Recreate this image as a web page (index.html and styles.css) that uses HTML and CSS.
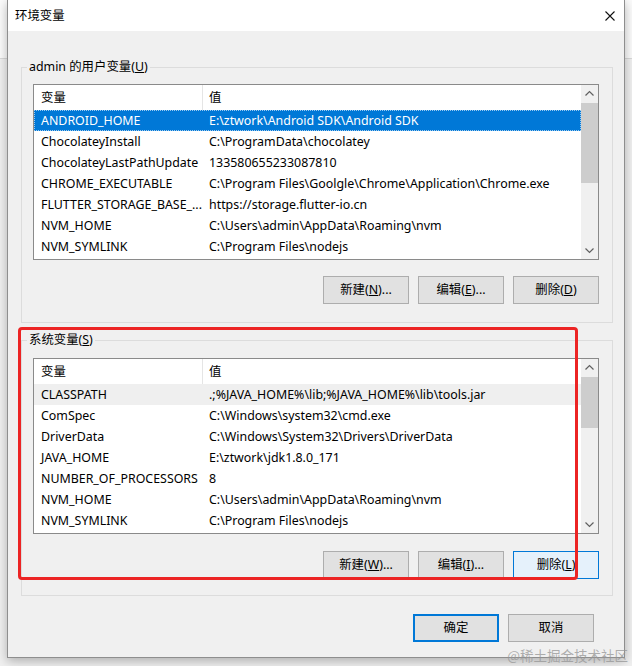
FILE: index.html
```html
<!DOCTYPE html>
<html lang="zh-CN">
<head>
<meta charset="utf-8">
<title>环境变量</title>
<link rel="stylesheet" href="styles.css">
</head>
<body>
<div class="screen">
  <div class="dialog">
    <div class="titlebar">
      <span class="title">环境变量</span>
      <svg class="close" width="10" height="10" viewBox="0 0 10 10"><path d="M0.5 0.5 L9.5 9.5 M9.5 0.5 L0.5 9.5" stroke="#111" stroke-width="1.1" fill="none"/></svg>
    </div>
    <div class="dialog-body">
      <fieldset class="group group-user">
        <legend>admin 的用户变量(<u>U</u>)</legend>
        <div class="group-inner">
          <div class="list">
            <div class="list-main">
              <div class="list-head"><div class="col-name">变量</div><div class="col-value">值</div></div>
              <div class="row selected"><div class="col-name">ANDROID_HOME</div><div class="col-value">E:\ztwork\Android SDK\Android SDK</div></div>
              <div class="row"><div class="col-name">ChocolateyInstall</div><div class="col-value">C:\ProgramData\chocolatey</div></div>
              <div class="row"><div class="col-name">ChocolateyLastPathUpdate</div><div class="col-value">133580655233087810</div></div>
              <div class="row"><div class="col-name">CHROME_EXECUTABLE</div><div class="col-value">C:\Program Files\Goolgle\Chrome\Application\Chrome.exe</div></div>
              <div class="row"><div class="col-name">FLUTTER_STORAGE_BASE_...</div><div class="col-value">https://storage.flutter-io.cn</div></div>
              <div class="row"><div class="col-name">NVM_HOME</div><div class="col-value">C:\Users\admin\AppData\Roaming\nvm</div></div>
              <div class="row"><div class="col-name">NVM_SYMLINK</div><div class="col-value">C:\Program Files\nodejs</div></div>
            </div>
            <div class="scrollbar">
              <div class="sb-arrow"><svg width="17" height="17" viewBox="0 0 17 17"><path d="M4.5 10.5 L8.5 6.5 L12.5 10.5" stroke="#606060" stroke-width="1.2" fill="none"/></svg></div>
              <div class="sb-track"><div class="sb-thumb" style="height:80px"></div></div>
              <div class="sb-arrow"><svg width="17" height="17" viewBox="0 0 17 17"><path d="M4.5 6.5 L8.5 10.5 L12.5 6.5" stroke="#606060" stroke-width="1.2" fill="none"/></svg></div>
            </div>
          </div>
          <div class="btn-row">
            <button class="btn">新建(<u>N</u>)...</button>
            <button class="btn">编辑(<u>E</u>)...</button>
            <button class="btn">删除(<u>D</u>)</button>
          </div>
        </div>
      </fieldset>

      <fieldset class="group group-system">
        <legend>系统变量(<u>S</u>)</legend>
        <div class="group-inner">
          <div class="list">
            <div class="list-main">
              <div class="list-head"><div class="col-name">变量</div><div class="col-value">值</div></div>
              <div class="row inactive"><div class="col-name">CLASSPATH</div><div class="col-value">.;%JAVA_HOME%\lib;%JAVA_HOME%\lib\tools.jar</div></div>
              <div class="row"><div class="col-name">ComSpec</div><div class="col-value">C:\Windows\system32\cmd.exe</div></div>
              <div class="row"><div class="col-name">DriverData</div><div class="col-value">C:\Windows\System32\Drivers\DriverData</div></div>
              <div class="row"><div class="col-name">JAVA_HOME</div><div class="col-value">E:\ztwork\jdk1.8.0_171</div></div>
              <div class="row"><div class="col-name">NUMBER_OF_PROCESSORS</div><div class="col-value">8</div></div>
              <div class="row"><div class="col-name">NVM_HOME</div><div class="col-value">C:\Users\admin\AppData\Roaming\nvm</div></div>
              <div class="row"><div class="col-name">NVM_SYMLINK</div><div class="col-value">C:\Program Files\nodejs</div></div>
            </div>
            <div class="scrollbar">
              <div class="sb-arrow"><svg width="17" height="17" viewBox="0 0 17 17"><path d="M4.5 10.5 L8.5 6.5 L12.5 10.5" stroke="#606060" stroke-width="1.2" fill="none"/></svg></div>
              <div class="sb-track"><div class="sb-thumb" style="height:51px"></div></div>
              <div class="sb-arrow"><svg width="17" height="17" viewBox="0 0 17 17"><path d="M4.5 6.5 L8.5 10.5 L12.5 6.5" stroke="#606060" stroke-width="1.2" fill="none"/></svg></div>
            </div>
          </div>
          <div class="btn-row">
            <button class="btn">新建(<u>W</u>)...</button>
            <button class="btn">编辑(<u>I</u>)...</button>
            <button class="btn btn-focus">删除(<u>L</u>)</button>
          </div>
        </div>
      </fieldset>

      <div class="dialog-actions">
        <button class="btn btn-default">确定</button>
        <button class="btn">取消</button>
      </div>
    </div>
  </div>
  <div class="highlight"></div>
  <div class="watermark">@稀土掘金技术社区</div>
</div>
</body>
</html>
```

FILE: styles.css
```css
html, body {
  margin: 0;
  padding: 0;
}

body {
  font-family: "Noto Sans", "Noto Sans CJK SC", sans-serif;
  font-size: 12.4px;
  color: #000;
}

.screen {
  position: relative;
  width: 632px;
  height: 666px;
  overflow: hidden;
  background: linear-gradient(to bottom, #fbfbfb 0, #fbfbfb 58px, #d9d9d9 58px, #d9d9d9 59px, #f0f0f0 59px, #f0f0f0 100%);
}

.dialog {
  margin-left: 7px;
  width: 618px;
  height: 658px;
  box-sizing: border-box;
  border: 1px solid #8e8e8e;
  border-top: none;
  background: #f0f0f0;
  box-shadow: 0 3px 10px rgba(0, 0, 0, 0.28);
  display: flex;
  flex-direction: column;
}

.titlebar {
  height: 31px;
  flex: none;
  background: #fff;
  display: flex;
  align-items: center;
  justify-content: space-between;
  padding: 0 9px 0 7px;
}

.title {
  line-height: 16px;
  padding-top: 1px;
}

.close {
  display: block;
}

.dialog-body {
  flex: 1;
  padding: 28px 11px 0 13px;
  display: flex;
  flex-direction: column;
}

.group {
  margin: 0;
  padding: 0;
  border: 1px solid #dcdcdc;
  min-width: 0;
}

.group legend {
  margin-left: 5px;
  padding: 0 2px;
  line-height: 16px;
}

.group-inner {
  padding: 9px 13px 18px 11px;
}

.group-system {
  margin-top: 9px;
}

.group-system .group-inner {
  padding-top: 10px;
  padding-bottom: 16px;
}

.group-system .btn-row {
  margin-top: 17px;
}

.list {
  display: flex;
  height: 176px;
  box-sizing: border-box;
  border: 1px solid #8a8a8a;
  background: #fff;
}

.list-main {
  flex: 1;
  min-width: 0;
  overflow: hidden;
}

.list-head {
  display: flex;
  height: 25px;
  align-items: stretch;
  line-height: 25px;
}

.row {
  display: flex;
  height: 21px;
  line-height: 21px;
  white-space: nowrap;
}

.col-name {
  width: 169px;
  flex: none;
  box-sizing: border-box;
  padding-left: 7px;
  overflow: hidden;
  white-space: nowrap;
}

.list-head .col-name {
  border-right: 1px solid #e5e5e5;
}

.col-value {
  flex: 1;
  padding-left: 6px;
  white-space: nowrap;
  overflow: hidden;
}

.row.selected {
  background: #0078d7;
  color: #fff;
  outline: 1px dotted #9ccaf0;
  outline-offset: -1px;
}

.row.inactive {
  background: #efefef;
}

.scrollbar {
  width: 17px;
  flex: none;
  background: #f0f0f0;
  display: flex;
  flex-direction: column;
}

.sb-arrow {
  height: 17px;
  flex: none;
}

.sb-arrow svg {
  display: block;
}

.sb-track {
  flex: 1;
  padding-top: 1px;
}

.sb-thumb {
  width: 17px;
  background: #cdcdcd;
}

.btn-row {
  display: flex;
  justify-content: flex-end;
  gap: 9px;
  margin-top: 16px;
}

.btn {
  width: 86px;
  height: 28px;
  box-sizing: border-box;
  border: 1px solid #adadad;
  background: #e1e1e1;
  font-family: inherit;
  font-size: 12.4px;
  color: #000;
  padding: 0;
  margin: 0;
  line-height: 16px;
}

.btn u {
  text-decoration-thickness: 1px;
  text-underline-offset: 1px;
}

.btn-focus {
  border-color: #0078d7;
  background: #e5f1fb;
}

.btn-default {
  border: 2px solid #0078d7;
}

.dialog-actions {
  display: flex;
  justify-content: flex-end;
  gap: 9px;
  margin-top: 18px;
  padding-right: 19px;
}

.highlight {
  position: absolute;
  left: 18px;
  top: 327px;
  width: 560px;
  height: 253px;
  box-sizing: border-box;
  border: 3px solid #ec2424;
  border-radius: 4px;
}

.watermark {
  position: absolute;
  right: 4px;
  bottom: 2px;
  font-family: "Noto Sans CJK SC", sans-serif;
  font-size: 13.5px;
  line-height: 18px;
  color: rgba(150, 150, 150, 0.75);
}
```
